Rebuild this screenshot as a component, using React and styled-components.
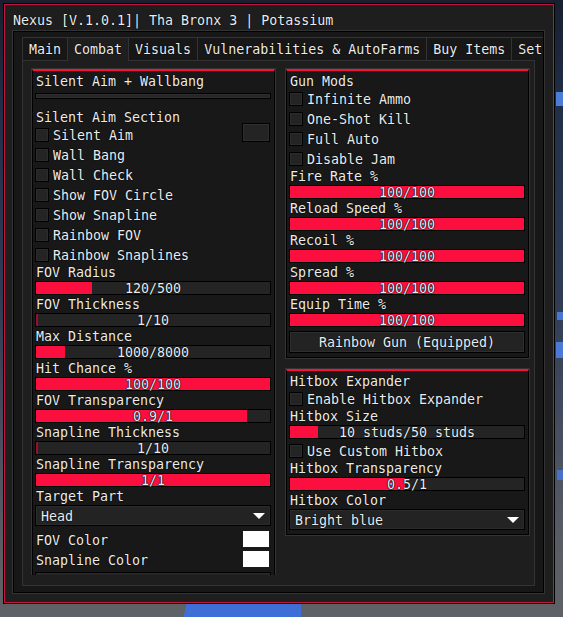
import React from 'react';
import styled, { createGlobalStyle } from 'styled-components';

const ACCENT = '#fa0f3f';
const FONT = '"DejaVu Sans Mono", "Liberation Mono", monospace';
const OUTLINE = '#333333';
const TEXT = '#ececec';
const STROKE = '0 0 1px #000, 0 0 1px #000';

const Global = createGlobalStyle`
  html, body { margin: 0; padding: 0; }
  body {
    width: 563px;
    height: 617px;
    overflow: hidden;
    font-family: ${FONT};
    background:
      linear-gradient(100deg, transparent 0 10px, #3e6fd6 10px) 176px 604px / 125px 13px no-repeat,
      linear-gradient(#4b7dd8, #4b7dd8) 556px 92px / 7px 14px no-repeat,
      linear-gradient(#4877d0, #4877d0) 557px 312px / 6px 8px no-repeat,
      linear-gradient(#4a7ad4, #4a7ad4) 556px 342px / 7px 16px no-repeat,
      linear-gradient(#4572c8, #4572c8) 557px 470px / 6px 10px no-repeat,
      linear-gradient(180deg, #18202f 0px, #22304a 120px, #2f3c54 300px, #4b5262 460px, #5b5e64 560px, #5e6166 617px);
  }
  #root { width: 563px; height: 617px; }
`;

const Page = styled.div`
  box-sizing: border-box;
  width: 563px;
  height: 617px;
  padding: 3px 0 0 3px;
`;

const Window = styled.div`
  box-sizing: border-box;
  width: 552px;
  height: 601px;
  border: 1px solid #000;
  padding: 1px;
  background: #1e1e1e;
  box-shadow: inset 0 0 0 1px #c3163c;
  display: flex;
  flex-direction: column;
  color: ${TEXT};
  font-size: 13.3px;
  text-shadow: ${STROKE};
`;

const Title = styled.div`
  box-sizing: border-box;
  height: 25px;
  padding: 6px 0 0 8px;
  display: flex;
  align-items: center;
  white-space: pre;
  flex: none;
`;

const Section = styled.div`
  flex: 1;
  margin: 0 8px 8px 7px;
  border: 1px solid ${OUTLINE};
  box-shadow: inset 0 0 0 1px #000;
  background: #171717;
  padding: 6px 0 7px 9px;
  display: flex;
  flex-direction: column;
`;

const TabRow = styled.div`
  display: flex;
  width: 521px;
  height: 24px;
  margin-bottom: -1px;
  overflow: hidden;
  position: relative;
  z-index: 1;
  flex: none;
`;

const Tab = styled.div`
  flex: none;
  box-sizing: border-box;
  height: ${p => (p.$active ? '24px' : '23px')};
  border: 1px solid ${OUTLINE};
  border-bottom: none;
  padding: 0 6px;
  margin-left: ${p => (p.$first ? '0' : '-1px')};
  background: ${p => (p.$active ? '#1e1e1e' : '#171717')};
  line-height: 23px;
  white-space: pre;
`;

const Content = styled.div`
  box-sizing: border-box;
  width: 513px;
  height: 526px;
  border: 1px solid ${OUTLINE};
  background: #1e1e1e;
  padding: 7px 0 0 8px;
  display: grid;
  grid-template-columns: 245px 245px;
  column-gap: 9px;
  align-items: start;
`;

const Column = styled.div`
  height: 507px;
  overflow: hidden;
  display: flex;
  flex-direction: column;
  gap: 9px;
`;

const Group = styled.div`
  flex: none;
  border: 1px solid ${OUTLINE};
`;

const GroupInner = styled.div`
  border: 1px solid #000;
  border-top: 2px solid ${ACCENT};
  background: #181818;
`;

const GroupTitle = styled.div`
  height: 18px;
  line-height: 22px;
  padding-left: 3px;
  white-space: pre;
`;

const GroupBody = styled.div`
  display: flex;
  flex-direction: column;
  padding: 0 3px 4px 2px;
`;

const Divider = styled.div`
  height: 6px;
  box-sizing: border-box;
  border: 1px solid #000;
  background: #262626;
  box-shadow: inset 0 0 0 1px #2e2e2e;
  margin-top: 4px;
`;

const Label = styled.div`
  height: ${p => p.$h || 13}px;
  line-height: ${p => (p.$h || 13) + 2}px;
  padding-left: 1px;
  margin-top: ${p => p.$mt || 0}px;
  white-space: pre;
`;

const ToggleRow = styled.div`
  display: flex;
  align-items: center;
  height: 20px;
  margin-top: ${p => p.$mt || 0}px;
`;

const Check = styled.div`
  box-sizing: border-box;
  width: 14px;
  height: 14px;
  border: 1px solid #000;
  background: #242424;
  box-shadow: inset 0 0 0 1px #2c2c2c;
  flex: none;
`;

const ToggleText = styled.span`
  margin-left: 4px;
  white-space: pre;
  line-height: 18px;
  padding-top: 1px;
`;

const KeyPicker = styled.div`
  box-sizing: border-box;
  width: 28px;
  height: 19px;
  margin-left: auto;
  margin-right: 1px;
  align-self: flex-start;
  margin-top: -2px;
  border: 1px solid #000;
  background: #242424;
  box-shadow: inset 0 0 0 1px #2f2f2f;
`;

const Bar = styled.div`
  box-sizing: border-box;
  height: 14px;
  border: 1px solid #000;
  background: #242424;
  margin: 3px 0 2px;
  display: grid;
  grid-template: 12px / 1fr;
`;

const Fill = styled.div`
  grid-area: 1 / 1;
  justify-self: start;
  height: 12px;
  background: ${p => (p.$empty ? '#9c0d2b' : ACCENT)};
`;

const BarValue = styled.div`
  grid-area: 1 / 1;
  justify-self: center;
  line-height: 13px;
  white-space: pre;
  text-shadow: 0 0 1px #000, 0 0 1px #000, 0 0 1px #000;
`;

const Dropdown = styled.div`
  box-sizing: border-box;
  height: ${p => p.$h || 21}px;
  margin-top: 3px;
  border: 1px solid #000;
  background: #232323;
  box-shadow: inset 0 0 0 1px #2b2b2b;
  display: flex;
  align-items: center;
  justify-content: space-between;
  padding: 1px 5px 0;
  white-space: pre;
  flex: none;
`;

const ColorRow = styled.div`
  display: flex;
  align-items: center;
  justify-content: space-between;
  height: 20px;
  margin-top: ${p => p.$mt || 0}px;
`;

const Swatch = styled.div`
  box-sizing: border-box;
  width: 28px;
  height: 18px;
  margin-right: 1px;
  border: 1px solid #1a1a1a;
  background: #ffffff;
  flex: none;
`;

const Button = styled.div`
  box-sizing: border-box;
  height: 22px;
  margin-top: 2px;
  padding-top: 1px;
  border: 1px solid #000;
  background: #232323;
  box-shadow: inset 0 0 0 1px #2e2e2e;
  display: flex;
  align-items: center;
  justify-content: center;
  white-space: pre;
`;

const Arrow = () => (
  <svg width="12" height="6" viewBox="0 0 12 6">
    <polygon points="0,0 12,0 6,6" fill="#ffffff" />
  </svg>
);

const Toggle = ({ label, mt, children }) => (
  <ToggleRow $mt={mt}>
    <Check />
    <ToggleText>{label}</ToggleText>
    {children}
  </ToggleRow>
);

const Slider = ({ label, value, pct }) => {
  const empty = pct === 0;
  return (
    <>
      <Label>{label}</Label>
      <Bar>
        <Fill $empty={empty} style={{ width: empty ? '2px' : `${pct * 100}%` }} />
        <BarValue>{value}</BarValue>
      </Bar>
    </>
  );
};

const tabs = ['Main', 'Combat', 'Visuals', 'Vulnerabilities & AutoFarms', 'Buy Items', 'Set'];

const leftToggles = ['Wall Bang', 'Wall Check', 'Show FOV Circle', 'Show Snapline', 'Rainbow FOV', 'Rainbow Snaplines'];

const leftSliders = [
  ['FOV Radius', '120/500', 0.24],
  ['FOV Thickness', '1/10', 0],
  ['Max Distance', '1000/8000', 0.125],
  ['Hit Chance %', '100/100', 1],
  ['FOV Transparency', '0.9/1', 0.9],
  ['Snapline Thickness', '1/10', 0],
  ['Snapline Transparency', '1/1', 1],
];

const gunToggles = ['Infinite Ammo', 'One-Shot Kill', 'Full Auto', 'Disable Jam'];
const gunSliders = ['Fire Rate %', 'Reload Speed %', 'Recoil %', 'Spread %', 'Equip Time %'];

export default function App() {
  return (
    <>
      <Global />
      <Page>
        <Window>
          <Title>Nexus [V.1.0.1]| Tha Bronx 3 | Potassium</Title>
          <Section>
            <TabRow>
              {tabs.map((t, i) => (
                <Tab key={t} $first={i === 0} $active={t === 'Combat'}>{t}</Tab>
              ))}
            </TabRow>
            <Content>
              <Column>
                <Group>
                  <GroupInner>
                    <GroupTitle>Silent Aim + Wallbang</GroupTitle>
                    <GroupBody>
                      <Divider />
                      <Label $h={18} $mt={9}>Silent Aim Section</Label>
                      <Toggle label="Silent Aim" mt={-1}>
                        <KeyPicker />
                      </Toggle>
                      {leftToggles.map(t => <Toggle key={t} label={t} />)}
                      {leftSliders.map(([l, v, p]) => <Slider key={l} label={l} value={v} pct={p} />)}
                      <Label>Target Part</Label>
                      <Dropdown>
                        <span>Head</span>
                        <Arrow />
                      </Dropdown>
                      <ColorRow $mt={3}>
                        <Label>FOV Color</Label>
                        <Swatch />
                      </ColorRow>
                      <ColorRow>
                        <Label>Snapline Color</Label>
                        <Swatch />
                      </ColorRow>
                      <Dropdown $h={22} />
                    </GroupBody>
                  </GroupInner>
                </Group>
              </Column>
              <Column>
                <Group>
                  <GroupInner>
                    <GroupTitle>Gun Mods</GroupTitle>
                    <GroupBody>
                      {gunToggles.map(t => <Toggle key={t} label={t} />)}
                      {gunSliders.map(l => <Slider key={l} label={l} value="100/100" pct={1} />)}
                      <Button>Rainbow Gun (Equipped)</Button>
                    </GroupBody>
                  </GroupInner>
                </Group>
                <Group>
                  <GroupInner>
                    <GroupTitle>Hitbox Expander</GroupTitle>
                    <GroupBody>
                      <Toggle label="Enable Hitbox Expander" />
                      <Slider label="Hitbox Size" value="10 studs/50 studs" pct={0.12} />
                      <Toggle label="Use Custom Hitbox" />
                      <Slider label="Hitbox Transparency" value="0.5/1" pct={0.49} />
                      <Label>Hitbox Color</Label>
                      <Dropdown>
                        <span>Bright blue</span>
                        <Arrow />
                      </Dropdown>
                    </GroupBody>
                  </GroupInner>
                </Group>
              </Column>
            </Content>
          </Section>
        </Window>
      </Page>
    </>
  );
}
